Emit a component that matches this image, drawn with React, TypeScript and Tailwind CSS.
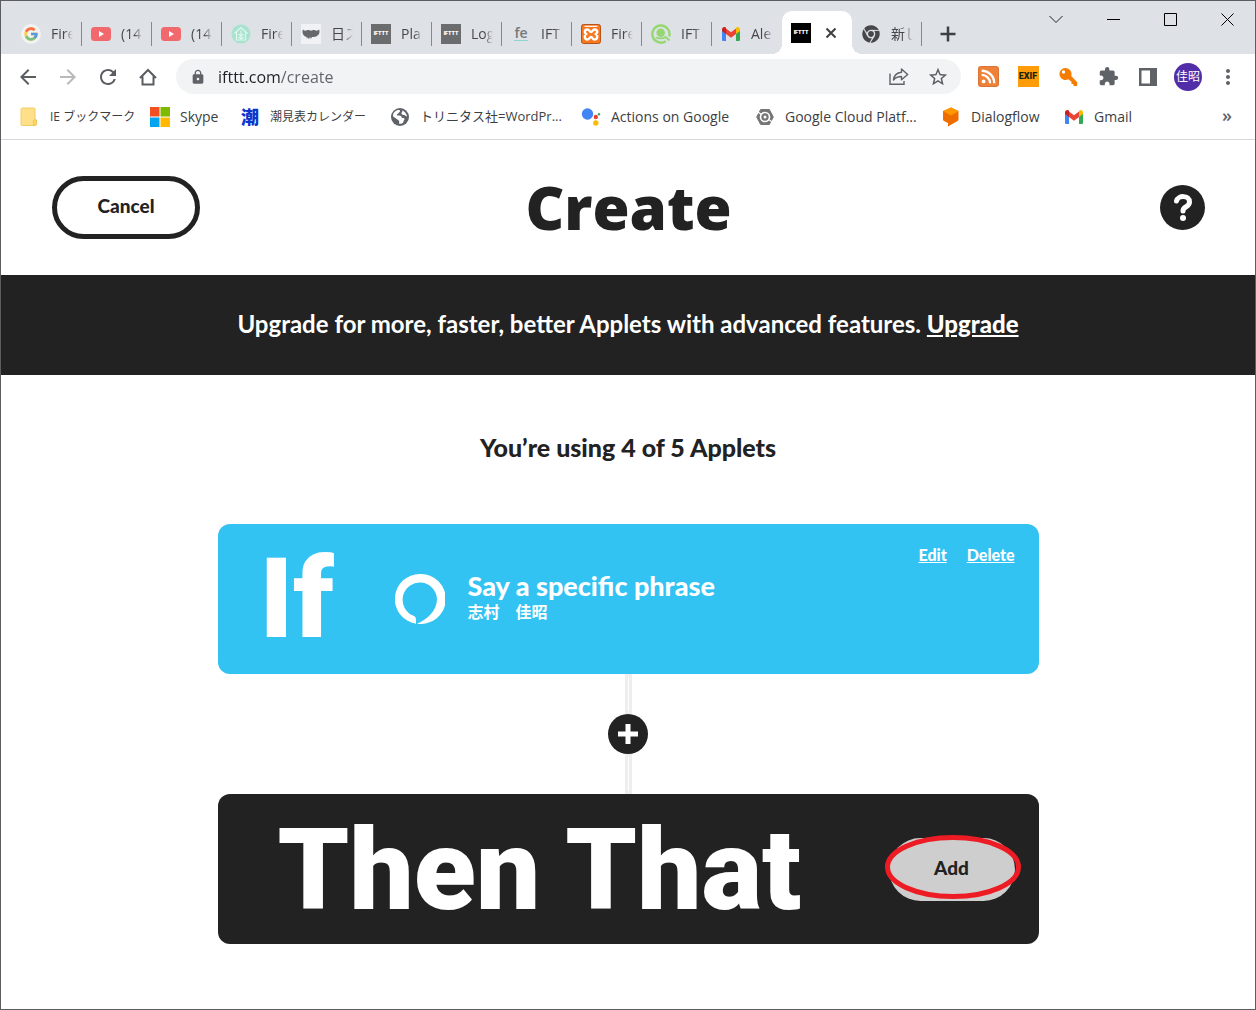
import type { ReactNode } from "react";
import { FcGoogle } from "react-icons/fc";
import { FaChrome } from "react-icons/fa";
import { MdArrowBack, MdArrowForward, MdExtension, MdRefresh, MdLock, MdStarOutline, MdMoreVert } from "react-icons/md";

function GmailIcon() {
  return (
    <svg viewBox="0 0 20 16" className="h-4 w-5" aria-hidden="true">
      <path d="M1 4v9.5A1.3 1.3 0 0 0 2.300 15H5V6z" fill="#4285f4" />
      <path d="M15 6v9h2.700a1.300 1.300 0 0 0 1.300-1.500V4z" fill="#34a853" />
      <path d="M15 2.500V8l4-3V3.300C19 1.200 16.700.2 15 1.500z" fill="#fbbc04" />
      <path d="M5 8V2.500l5 3.800 5-3.800V8l-5 3.800z" fill="#ea4335" />
      <path d="M1 3.300V5l4 3V1.500C3.300.2 1 1.200 1 3.300z" fill="#c5221f" />
    </svg>
  );
}

function YouTubeIcon() {
  return (
    <svg viewBox="0 0 20 20" className="size-5" aria-hidden="true">
      <rect y="3" width="20" height="14" rx="3.500" fill="#f1696c" />
      <path d="M8 7v6l5-3z" fill="#fff" />
    </svg>
  );
}

function HouseIcon() {
  return (
    <svg viewBox="0 0 20 20" className="size-5" aria-hidden="true">
      <circle cx="10" cy="10" r="9.500" fill="#a9e2cf" />
      <g fill="none" stroke="#e2f7ef" strokeWidth="1.100">
        <path d="M3.500 9.500 10 3.500l6.500 6M5.500 8.500V16h9V8.500" />
        <path d="M10 16V6.500M7.500 10l2.500 2 2.500-2M7.500 13l2.500 2 2.500-2" />
      </g>
    </svg>
  );
}

function MoustacheIcon() {
  return (
    <svg viewBox="0 0 20 20" className="size-5" aria-hidden="true">
      <rect width="20" height="20" fill="#f1f2f4" />
      <path
        d="M2 5.200c.8 1.800 2.500 1.600 4 1 1.500-.5 3 .6 4 .6s2.500-1.100 4-.6c1.500.6 3.200.8 4-1 1.500 3.500-.5 7-4 7.500-1 .3-2 .3-3 .3l-.4 1.500-.8-1.400-.8 2.200-.8-2-.7 2-.7-2.200-.8 1.700-.5-1.900C2.500 12.300.5 9 2 5.200z"
        fill="#66686b"
      />
    </svg>
  );
}

function IftttTile({ active }: { active?: boolean }) {
  return (
    <span className={active ? "flex size-5 items-center justify-center bg-black" : "flex size-5 items-center justify-center bg-[#6b6c6e]"}>
      <span className="font-['Inter'] text-[5px] leading-none font-black text-white">IFTTT</span>
    </span>
  );
}

function FeIcon() {
  return (
    <span className="mx-auto border-b border-[#8fd5cf] font-['Open_Sans'] text-sm leading-[14px] font-semibold text-[#77797c]">fe</span>
  );
}

function XamppIcon() {
  return (
    <svg viewBox="0 0 20 20" className="size-5" aria-hidden="true">
      <rect x=".5" y=".5" width="19" height="19" rx="2" fill="#f87820" stroke="#b5531a" />
      <path d="M3.500 2.300h13" stroke="#fff" strokeWidth="1.200" />
      <path
        d="M6.300 5.500c-2.800 0-3.300 3-1.300 4.500-2 1.500-1.500 5.500 1.300 5.500 2.400 0 2-2.500 3.700-2.500s1.300 2.500 3.700 2.500c2.800 0 3.300-4 1.300-5.500 2-1.500 1.500-4.500-1.300-4.500-2.400 0-2 2.500-3.700 2.500S8.700 5.500 6.300 5.500z"
        fill="none"
        stroke="#fff"
        strokeWidth="2.400"
      />
    </svg>
  );
}

function GreenQIcon() {
  return (
    <svg viewBox="0 0 20 20" className="size-5" fill="none" stroke="#95d872" aria-hidden="true">
      <path d="M14.800 17.200A8.600 8.600 0 1 1 18.200 12.500" strokeWidth="2.400" />
      <circle cx="9.700" cy="8.800" r="4.300" fill="#95d872" stroke="none" />
      <path d="M5 13.500c2.500 1.300 7 1.300 9.500-.5l4 3.500" strokeWidth="1.800" />
    </svg>
  );
}

function FolderIcon() {
  return (
    <svg viewBox="0 0 20 20" className="size-5" aria-hidden="true">
      <path d="M1 2.500A1.500 1.500 0 0 1 2.500 1H14a1 1 0 0 1 1 1v10l1.500 1v4.500l-1.500 1H2.500A1.500 1.500 0 0 1 1 17z" fill="#ffe08a" stroke="#f2cd61" />
      <path d="M13.500 18.500v-5c0-1 3-1 3 0v4l-1.500 1z" fill="#ffd766" stroke="#e5bd4f" strokeWidth=".7" />
    </svg>
  );
}

function MicrosoftIcon() {
  return (
    <svg viewBox="0 0 20 20" className="size-5" aria-hidden="true">
      <rect width="9.500" height="9.500" fill="#f25022" />
      <rect x="10.500" width="9.500" height="9.500" fill="#7fba00" />
      <rect y="10.500" width="9.500" height="9.500" fill="#00a4ef" />
      <rect x="10.500" y="10.500" width="9.500" height="9.500" fill="#ffb900" />
    </svg>
  );
}

function GlobeIcon() {
  return (
    <svg viewBox="0 0 20 20" className="size-5" aria-hidden="true">
      <circle cx="10" cy="10" r="9" fill="#5f6368" />
      <path d="M3 8.500c0-3 3-5.500 5.500-5.500 2.500 0 1.500 2 .5 2.500S8.500 7 7.500 7 6.500 8.500 8 8.500s3.500 0 3.500 1.500 3 .5 3 2-1 1-1 2.500S11 17 9.500 16.800c-1 0 .5-2.300-.8-3.300S6.500 12 5.500 11 3 10.500 3 8.500zM12 3.500c2.500.8 4.800 3 5 6-1.500 0-1.500-1.500-3-1.500s-2.500-.5-2.500-1.700S13 5 12 3.500z" fill="#fff" />
    </svg>
  );
}

function AssistantIcon() {
  return (
    <svg viewBox="0 0 20 20" className="size-5" aria-hidden="true">
      <circle cx="6.500" cy="7" r="5.700" fill="#4285f4" />
      <circle cx="14.800" cy="10" r="2.200" fill="#ea4335" />
      <circle cx="14.800" cy="16" r="2.700" fill="#fbbc04" />
      <circle cx="18" cy="7.300" r="1.200" fill="#34a853" />
    </svg>
  );
}

function CloudPlatformIcon() {
  return (
    <svg viewBox="0 0 20 20" className="size-5" aria-hidden="true">
      <path d="M5.700 2.500h8.600l4 7.500-4 7.500H5.700l-4-7.500z" fill="#757575" stroke="#757575" strokeLinejoin="round" />
      <circle cx="10" cy="10" r="5.300" fill="#fff" />
      <path d="M2 4.500 6.500 7.500M18 15.500l-4.500-3" stroke="#fff" strokeWidth="1.200" />
      <circle cx="10" cy="10" r="2.600" fill="none" stroke="#757575" strokeWidth="2.200" />
    </svg>
  );
}

function DialogflowIcon() {
  return (
    <svg viewBox="0 0 20 20" className="size-5" aria-hidden="true">
      <path d="M10 .5 17.500 4v8.500a2 2 0 0 1-1 1.500L7 19.500V16L3 14a2 2 0 0 1-1-1.500V4z" fill="#ef6c00" />
      <path d="M10 .5 17.500 4.300 10 8.500 2.300 4.300z" fill="#ff9800" />
    </svg>
  );
}

function RssTile() {
  return (
    <svg viewBox="0 0 20 20" className="size-[21px]" aria-hidden="true">
      <rect x=".5" y=".5" width="19" height="19" rx="2.500" fill="#ee8138" stroke="#dc7437" />
      <circle cx="5.300" cy="14.700" r="1.800" fill="#fff" />
      <path d="M3.500 8.500a8 8 0 0 1 8 8M3.500 4.500a12 12 0 0 1 12 12" fill="none" stroke="#fff" strokeWidth="2.200" />
    </svg>
  );
}

function KeyIcon() {
  return (
    <svg viewBox="0 0 20 20" className="size-5" aria-hidden="true">
      <path d="M7.500 1a6 6 0 0 1 5.700 8l6 6.200V19h-3.700v-2h-2v-2.200l-3.200-2.500A6 6 0 1 1 7.500 1z" fill="#f57c00" />
      <circle cx="5.500" cy="5" r="1.700" fill="#fff" />
    </svg>
  );
}

function ShareIcon() {
  return (
    <svg viewBox="0 0 20 20" className="size-5" fill="none" stroke="#5f6368" strokeWidth="1.400" aria-hidden="true">
      <path d="M1 6.500V17.300h14V14" />
      <path d="M12.500 2 18.700 7.500l-6.200 5.300V9.500c-3.500 0-6 1-8 3.500.4-4 3-7.300 8-7.800z" strokeLinejoin="round" />
    </svg>
  );
}

function HomeIcon() {
  return (
    <svg viewBox="0 0 20 20" className="size-5" fill="none" stroke="#5a5d61" strokeWidth="2" aria-hidden="true">
      <path d="M2 11 10 3l8 8M4.500 9.500V17.500h11V9.500" />
    </svg>
  );
}

function AlexaIcon() {
  return (
    <svg viewBox="0 0 50 50" className="size-[50px] shrink-0" aria-hidden="true">
      <path
        d="M25 0a25 25 0 0 0-4 49.700v-4.400c0-1.800-1-2.900-2.500-3.600A17.200 17.200 0 1 1 42 25c0 12-10 20.500-20 24.700A25 25 0 1 0 25 0z"
        fill="#fff"
      />
    </svg>
  );
}

type Tab = { title: string; icon: ReactNode };

const tabs: Tab[] = [
  { title: "Fire", icon: <span className="flex size-5 items-center justify-center rounded-full bg-[#f1f2f4]"><FcGoogle className="size-4 opacity-70" /></span> },
  { title: "(14", icon: <YouTubeIcon /> },
  { title: "(14", icon: <YouTubeIcon /> },
  { title: "Fire", icon: <HouseIcon /> },
  { title: "日ス", icon: <MoustacheIcon /> },
  { title: "Pla", icon: <IftttTile /> },
  { title: "Log", icon: <IftttTile /> },
  { title: "IFT", icon: <FeIcon /> },
  { title: "Fire", icon: <XamppIcon /> },
  { title: "IFT", icon: <GreenQIcon /> },
  { title: "Ale", icon: <GmailIcon /> },
];

function InactiveTab({ tab, divider }: { tab: Tab; divider: boolean }) {
  return (
    <button
      type="button"
      className={
        divider
          ? "flex h-6 w-[70px] shrink-0 items-center gap-2.5 border-r border-[#85888c] pl-[9px]"
          : "flex h-6 w-[70px] shrink-0 items-center gap-2.5 pl-[9px]"
      }
    >
      <span className="flex w-5 shrink-0 justify-center">{tab.icon}</span>
      <span className="w-[22px] overflow-hidden text-left text-sm whitespace-nowrap text-[#45474b] [mask-image:linear-gradient(to_right,black_60%,transparent)]">
        {tab.title}
      </span>
    </button>
  );
}

function TabStrip() {
  return (
    <div className="flex h-[53px] bg-[#dee1e6] pl-[11px]">
      <div className="flex items-center pt-3">
        {tabs.map((tab, i) => (
          <InactiveTab key={i} tab={tab} divider={i < tabs.length - 1} />
        ))}
      </div>
      <div className="relative mt-2.5 flex w-[70px] shrink-0 items-center gap-2.5 rounded-t-[10px] bg-white pl-[9px]">
        <span className="absolute bottom-0 -left-2.5 size-2.5 bg-[radial-gradient(circle_at_0_0,transparent_10px,white_10px)]" />
        <span className="absolute -right-2.5 bottom-0 size-2.5 bg-[radial-gradient(circle_at_100%_0,transparent_10px,white_10px)]" />
        <IftttTile active />
        <button type="button" aria-label="Close tab" className="flex size-5 items-center justify-center">
          <svg viewBox="0 0 12 12" className="size-3" stroke="#3c4043" strokeWidth="2" aria-hidden="true">
            <path d="m1.500 1.500 9 9m0-9-9 9" />
          </svg>
        </button>
      </div>
      <div className="flex items-center gap-2.5 pt-3">
        <InactiveTab tab={{ title: "新しい", icon: <FaChrome className="size-[18px] text-[#45474a]" /> }} divider />
        <button type="button" aria-label="New tab" className="flex size-8 items-center justify-center text-[#3c4043]">
          <svg viewBox="0 0 16 16" className="size-4" stroke="currentColor" strokeWidth="2.500" aria-hidden="true">
            <path d="M8 .5v15M.5 8h15" />
          </svg>
        </button>
      </div>
      <div className="ml-auto flex h-9 items-center gap-[44px] pr-[21px]">
        <button type="button" aria-label="Search tabs">
          <svg viewBox="0 0 14 14" className="size-3.5" fill="none" stroke="#222" aria-hidden="true"><path d="m.5 4 6.500 6.500L13.500 4" /></svg>
        </button>
        <button type="button" aria-label="Minimize">
          <svg viewBox="0 0 13 13" className="size-[13px]" aria-hidden="true"><rect y="6" width="13" height="1" /></svg>
        </button>
        <button type="button" aria-label="Maximize">
          <svg viewBox="0 0 13 13" className="size-[13px]" fill="none" stroke="#000" aria-hidden="true"><path d="M.5.5h12v12H.5z" /></svg>
        </button>
        <button type="button" aria-label="Close">
          <svg viewBox="0 0 13 13" className="size-[13px]" stroke="#000" aria-hidden="true"><path d="m.5.5 12 12m0-12-12 12" /></svg>
        </button>
      </div>
    </div>
  );
}

function Toolbar() {
  return (
    <div className="flex h-[45px] items-center pr-[7px] pl-[15px]">
      <div className="flex items-center gap-4 text-[#5a5d61]">
        <button type="button" aria-label="Back"><MdArrowBack className="size-6" /></button>
        <button type="button" aria-label="Forward" className="text-[#bababc]"><MdArrowForward className="size-6" /></button>
        <button type="button" aria-label="Reload"><MdRefresh className="size-6" /></button>
        <button type="button" aria-label="Home" className="flex size-6 items-center justify-center"><HomeIcon /></button>
      </div>
      <div className="ml-4 flex h-[35px] min-w-0 flex-1 items-center rounded-full bg-[#f1f3f4] pr-3 pl-3.5">
        <MdLock className="size-4 shrink-0 text-[#5f6368]" />
        <input
          type="text"
          aria-label="Address"
          defaultValue="ifttt.com/create"
          className="ml-3 min-w-0 flex-1 bg-[linear-gradient(to_right,#202124_62px,#5f6368_62px)] bg-clip-text text-base text-transparent outline-none"
        />
        <button type="button" aria-label="Share"><ShareIcon /></button>
        <button type="button" aria-label="Bookmark this page" className="ml-[18px]"><MdStarOutline className="size-[22px] text-[#5a5d61]" /></button>
      </div>
      <div className="ml-[7px] flex items-center *:flex *:w-10 *:items-center *:justify-center">
        <button type="button" aria-label="RSS"><RssTile /></button>
        <button type="button" aria-label="EXIF">
          <span className="flex size-[21px] items-center justify-center bg-[#ff9c0a] font-['Roboto'] text-[9px] font-black text-[#1c2405]">EXIF</span>
        </button>
        <button type="button" aria-label="Passwords"><KeyIcon /></button>
        <button type="button" aria-label="Extensions"><MdExtension className="size-[21px] text-[#5f6368]" /></button>
        <button type="button" aria-label="Side panel">
          <svg viewBox="0 0 18 18" className="size-[18px]" aria-hidden="true">
            <path d="M0 0h18v18H0zM2.500 2.500v13H11v-13z" fill="#5f6368" fillRule="evenodd" />
          </svg>
        </button>
        <button type="button" aria-label="Profile">
          <span className="flex size-7 items-center justify-center rounded-full bg-[#512da8] text-xs text-white">佳昭</span>
        </button>
        <button type="button" aria-label="Menu"><MdMoreVert className="size-6 shrink-0 text-[#5f6368]" /></button>
      </div>
    </div>
  );
}

const bookmarks = [
  { label: "IE ブックマーク", icon: <FolderIcon />, width: "w-[130px]", size: "text-xs" },
  { label: "Skype", icon: <MicrosoftIcon />, width: "w-[90px]", size: "text-sm" },
  { label: "潮見表カレンダー", icon: <span className="text-lg leading-5 font-black text-[#0a36d0]">潮</span>, width: "w-[150px]", size: "text-xs" },
  { label: "トリニタス社=WordPr...", icon: <GlobeIcon />, width: "w-[191px]", size: "text-[13px]" },
  { label: "Actions on Google", icon: <AssistantIcon />, width: "w-[174px]", size: "text-sm" },
  { label: "Google Cloud Platf...", icon: <CloudPlatformIcon />, width: "w-[186px]", size: "text-sm" },
  { label: "Dialogflow", icon: <DialogflowIcon />, width: "w-[123px]", size: "text-sm" },
  { label: "Gmail", icon: <GmailIcon />, width: "w-[90px]", size: "text-sm" },
];

function BookmarksBar() {
  return (
    <nav aria-label="Bookmarks" className="flex h-[41px] items-center border-b border-[#d5d7da] pr-[23px] pb-1 pl-[19px]">
      {bookmarks.map((b) => (
        <a key={b.label} href="#" className={`${b.width} ${b.size} flex shrink-0 items-center gap-2.5 whitespace-nowrap text-[#3c4043]`}>
          <span className="flex w-5 shrink-0 justify-center">{b.icon}</span>
          {b.label}
        </a>
      ))}
      <button type="button" aria-label="More bookmarks" className="ml-auto pb-1 text-lg leading-none font-semibold text-[#5f6368]">»</button>
    </nav>
  );
}

function Connector() {
  return (
    <div className="flex h-[120px] flex-col items-center">
      <span className="flex w-[7px] flex-1 justify-center bg-[#eee] py-[3px]"><span className="w-px bg-white" /></span>
      <button type="button" aria-label="Add another" className="flex size-10 items-center justify-center rounded-full bg-[#222]">
        <svg viewBox="0 0 20 20" className="size-5" stroke="#fff" strokeWidth="5" aria-hidden="true"><path d="M10 0v20M0 10h20" /></svg>
      </button>
      <span className="flex w-[7px] flex-1 justify-center bg-[#eee] py-[3px]"><span className="w-px bg-white" /></span>
    </div>
  );
}

export default function App() {
  return (
    <div className="flex min-h-screen flex-col border border-[#5c5d60] bg-white font-['Open_Sans','Noto_Sans_CJK_JP',sans-serif]">
      <TabStrip />
      <Toolbar />
      <BookmarksBar />
      <div className="flex-1 font-['Lato','Noto_Sans_CJK_JP',sans-serif] text-[#222]">
        <header className="grid h-[135px] grid-cols-[1fr_auto_1fr] items-center pr-[50px] pl-[51px]">
          <button type="button" className="h-[63px] w-[148px] justify-self-start rounded-full border-5 border-[#222] pb-0.5 text-[19px] font-black">Cancel</button>
          <h1 className="pb-0.5 font-['Open_Sans'] text-[60px] leading-none font-extrabold">Create</h1>
          <button type="button" aria-label="Help" className="flex size-[45px] items-center justify-center justify-self-end rounded-full bg-[#222]">
            <svg viewBox="0 0 20 30" className="h-[30px] w-5" fill="none" stroke="#fff" aria-hidden="true">
              <path d="M3.500 8C5 2 16.500 2 16.500 9c0 5.500-6.500 4-6.500 9" strokeWidth="5" strokeLinecap="round" />
              <circle cx="10" cy="25" r="3" fill="#fff" stroke="none" />
            </svg>
          </button>
        </header>
        <div className="flex h-[100px] items-center justify-center bg-[#222] pb-0.5 text-2xl font-bold text-white">
          <p>Upgrade for more, faster, better Applets with advanced features. <a href="#" className="font-black underline">Upgrade</a></p>
        </div>
        <main className="mx-auto w-full max-w-[821px]">
          <p className="flex h-[149px] items-center justify-center pb-1 text-[25px] font-black">You’re using 4 of 5 Applets</p>
          <section className="relative flex h-[150px] items-center rounded-xl bg-[#33c3f3] pl-[42px] text-white">
            <h2 className="w-[135px] font-['Roboto'] text-[112px] leading-none font-black">If</h2>
            <AlexaIcon />
            <div className="mb-1.5 ml-[23px]">
              <h3 className="text-[27px] leading-8 font-black">Say a specific phrase</h3>
              <p className="text-base leading-5 font-bold">志村　佳昭</p>
            </div>
            <div className="absolute top-[19px] right-6 flex gap-5 text-base font-black">
              <a href="#" className="underline">Edit</a>
              <a href="#" className="underline">Delete</a>
            </div>
          </section>
          <Connector />
          <section className="flex h-[150px] items-center justify-between rounded-xl bg-[#222] pr-6 pl-[60px] text-white">
            <h2 className="pt-0.5 font-['Roboto'] text-[114px] leading-none font-black whitespace-nowrap">Then That</h2>
            <div className="relative">
              <button type="button" className="block h-[63px] w-[126px] rounded-full bg-[#cecece] pb-0.5 text-[19px] font-black text-[#222]">Add</button>
              <svg viewBox="0 0 136 64" className="pointer-events-none absolute -top-[3px] -left-1 h-16 w-[136px] max-w-none" fill="none" aria-hidden="true">
                <ellipse cx="68" cy="32" rx="65.500" ry="29.500" stroke="#ed1c24" strokeWidth="5" />
              </svg>
            </div>
          </section>
        </main>
      </div>
    </div>
  );
}
